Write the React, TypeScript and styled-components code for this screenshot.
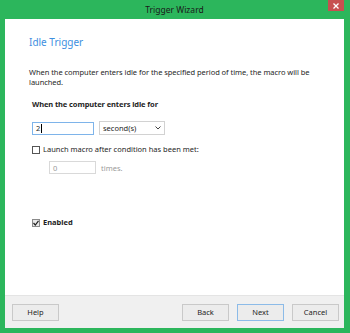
import styled, { createGlobalStyle } from 'styled-components';

const Global = createGlobalStyle`
  html, body { margin: 0; padding: 0; }
  body {
    font-family: "Noto Sans", "Open Sans", sans-serif;
    font-size: 7.5px;
    color: #1e1e1e;
    background: #2cb65c;
  }
`;

const Window = styled.div`
  width: 350px;
  height: 333px;
  box-sizing: border-box;
  background: #2cb65c;
  padding: 0 6px 5px 5px;
  display: flex;
  flex-direction: column;
`;

const TitleBar = styled.div`
  height: 19px;
  display: grid;
  grid-template-columns: 1fr auto 1fr;
  align-items: center;
`;

const Title = styled.div`
  grid-column: 2;
  font-size: 8.5px;
  color: #1a1a1a;
  padding-bottom: 1px;
`;

const CloseButton = styled.div`
  grid-column: 3;
  justify-self: end;
  align-self: start;
  width: 16px;
  height: 11px;
  background: #c75050;
  display: flex;
  align-items: center;
  justify-content: center;
`;

const Client = styled.div`
  flex: 1;
  background: #fff;
  display: flex;
  flex-direction: column;
`;

const Content = styled.div`
  flex: 1;
  padding: 17px 20px 0 24px;
  display: flex;
  flex-direction: column;
`;

const Heading = styled.div`
  font-size: 10px;
  color: #3d8fe0;
  line-height: 13px;
`;

const Description = styled.div`
  margin-top: 19px;
  line-height: 9.5px;
  width: 290px;
  letter-spacing: -0.05px;
`;

const Section = styled.div`
  padding-left: 3px;
  display: flex;
  flex-direction: column;
`;

const Label = styled.div`
  margin-top: 12px;
  font-weight: 700;
  line-height: 10px;
  letter-spacing: -0.1px;
`;

const Row = styled.div<{ $indent?: number; $top: number }>`
  display: flex;
  align-items: center;
  gap: 5px;
  margin-top: ${(p) => p.$top}px;
  padding-left: ${(p) => p.$indent ?? 0}px;
`;

const TextBox = styled.div<{ $width: number; $focused?: boolean; $disabled?: boolean }>`
  width: ${(p) => p.$width}px;
  height: 13px;
  box-sizing: border-box;
  border: 1px solid ${(p) => (p.$focused ? '#7eb4ea' : '#d9d9d9')};
  color: ${(p) => (p.$disabled ? '#9a9a9a' : '#1e1e1e')};
  padding: 0 3px;
  display: flex;
  align-items: center;
`;

const Caret = styled.span`
  display: inline-block;
  width: 1px;
  height: 9px;
  background: #000;
  margin-left: 0.5px;
`;

const Select = styled.div`
  width: 66px;
  height: 14px;
  box-sizing: border-box;
  border: 1px solid #d2d2d2;
  background: #fff;
  padding: 0 3px;
  display: flex;
  align-items: center;
  justify-content: space-between;
`;

const Muted = styled.span`
  color: #9a9a9a;
`;

const CheckRow = styled.label<{ $top: number; $bold?: boolean }>`
  display: flex;
  align-items: center;
  gap: 3px;
  margin-top: ${(p) => p.$top}px;
  font-weight: ${(p) => (p.$bold ? 700 : 400)};
  line-height: 9px;
`;

const Box = styled.span<{ $checked?: boolean }>`
  width: 8px;
  height: 8px;
  box-sizing: border-box;
  border: 1px solid ${(p) => (p.$checked ? '#8a8a8a' : '#555')};
  background: ${(p) => (p.$checked ? '#e8e8e8' : '#fff')};
  display: flex;
  align-items: center;
  justify-content: center;
`;

const Footer = styled.div`
  height: 33px;
  box-sizing: border-box;
  border-top: 1px solid #e4e4e4;
  background: #f0f0f0;
  padding: 0 5px 0 7px;
  display: flex;
  align-items: center;
  gap: 8px;
`;

const Spacer = styled.div`
  flex: 1;
`;

const Button = styled.div<{ $primary?: boolean }>`
  width: 47px;
  height: 17px;
  box-sizing: border-box;
  border: 1px solid ${(p) => (p.$primary ? '#8cbbe8' : '#c9c9c9')};
  background: #ececec;
  display: flex;
  align-items: center;
  justify-content: center;
  color: #1e1e1e;
`;

export default function App() {
  return (
    <Window>
      <Global />
      <TitleBar>
        <Title>Trigger Wizard</Title>
        <CloseButton>
          <svg width="6" height="6" viewBox="0 0 6 6">
            <path d="M0.5 0.5 L5.5 5.5 M5.5 0.5 L0.5 5.5" stroke="#fff" strokeWidth="1.3" />
          </svg>
        </CloseButton>
      </TitleBar>
      <Client>
        <Content>
          <Heading>Idle Trigger</Heading>
          <Description>
            When the computer enters idle for the specified period of time, the macro will be launched.
          </Description>
          <Section>
            <Label>When the computer enters idle for</Label>
            <Row $top={12}>
              <TextBox $width={62} $focused>
                2<Caret />
              </TextBox>
              <Select>
                <span>second(s)</span>
                <svg width="6" height="4" viewBox="0 0 6 4">
                  <path d="M0.5 0.5 L3 3 L5.5 0.5" fill="none" stroke="#444" strokeWidth="1" />
                </svg>
              </Select>
            </Row>
            <CheckRow $top={10}>
              <Box />
              Launch macro after condition has been met:
            </CheckRow>
            <Row $top={7} $indent={17}>
              <TextBox $width={47} $disabled>
                0
              </TextBox>
              <Muted>times.</Muted>
            </Row>
            <CheckRow $top={44} $bold>
              <Box $checked>
                <svg width="6" height="6" viewBox="0 0 6 6">
                  <path d="M0.5 3 L2.3 5 L5.5 0.8" fill="none" stroke="#222" strokeWidth="1.2" />
                </svg>
              </Box>
              Enabled
            </CheckRow>
          </Section>
        </Content>
        <Footer>
          <Button>Help</Button>
          <Spacer />
          <Button>Back</Button>
          <Button $primary>Next</Button>
          <Button>Cancel</Button>
        </Footer>
      </Client>
    </Window>
  );
}
